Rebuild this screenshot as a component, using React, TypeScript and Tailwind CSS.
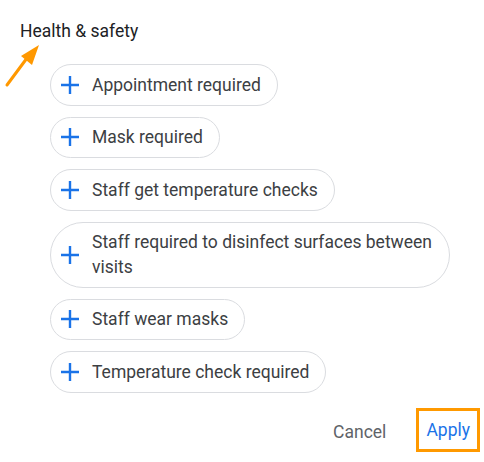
const options = [
  'Appointment required',
  'Mask required',
  'Staff get temperature checks',
  'Staff required to disinfect surfaces between visits',
  'Staff wear masks',
  'Temperature check required',
]

const PlusIcon = () => (
  <svg width="20" height="20" viewBox="0 0 20 20" className="shrink-0">
    <path d="M10 1v18M1 10h18" stroke="#1a73e8" strokeWidth="2.4" fill="none" />
  </svg>
)

export default function App() {
  return (
    <div
      className="relative w-[484px] h-[462px] bg-white text-[#3c4043]"
      style={{ fontFamily: 'Roboto, "Liberation Sans", sans-serif' }}
    >
      {/* Annotation arrow */}
      <svg className="absolute left-0 top-0" width="60" height="100" viewBox="0 0 60 100">
        <path d="M7 85L30 54" stroke="#ff9800" strokeWidth="3" strokeLinecap="round" fill="none" />
        <path d="M39 45L21 56L32 65Z" fill="#ff9800" />
      </svg>

      <div className="pt-[19px] pl-5 pr-1 flex flex-col">
        <h2 className="text-[17.5px] leading-6 font-normal text-[#202124]">Health &amp; safety</h2>

        <div className="mt-[21px] pl-[30px] flex flex-col items-start gap-[11px]">
          {options.map((label) => (
            <button
              key={label}
              className="flex items-center gap-3 max-w-[400px] pl-[9px] pr-4 py-[7.5px] border border-[#dadce0] rounded-full text-left text-[17.5px] leading-[24.5px] text-[#3c4043]"
            >
              <PlusIcon />
              <span>{label}</span>
            </button>
          ))}
        </div>

        <div className="mt-[15px] flex items-center justify-end gap-[30px]">
          <button className="text-[17.5px] leading-6 text-[#5f6368] translate-y-[2px]">Cancel</button>
          <button className="border-[3px] border-[#ff9900] px-[7px] py-[7px] text-[17.5px] leading-6 text-[#1a73e8]">
            Apply
          </button>
        </div>
      </div>
    </div>
  )
}
